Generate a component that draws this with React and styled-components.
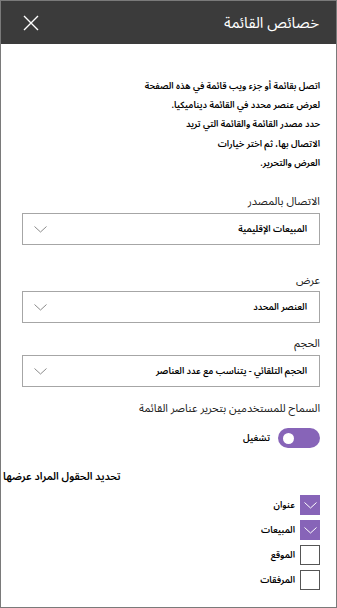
import React from 'react';
import styled, { createGlobalStyle } from 'styled-components';

const Global = createGlobalStyle`
    html, body {
        margin: 0;
        padding: 0;
        background: #ffffff;
    }
    * {
        box-sizing: border-box;
    }
`;

const purple = '#8764b8';

const Panel = styled.div`
    width: 337px;
    height: 608px;
    border: 1px solid #7a7a7a;
    direction: rtl;
    font-family: 'Noto Sans Arabic', 'DejaVu Sans', sans-serif;
    color: #222;
    overflow: hidden;
    display: flex;
    flex-direction: column;
`;

const Header = styled.div`
    height: 43px;
    background: #3b3b3b;
    display: flex;
    align-items: center;
    justify-content: space-between;
    padding: 0 17px 0 22px;
    flex-shrink: 0;
`;

const Title = styled.div`
    color: #ffffff;
    font-size: 15px;
    line-height: 20px;
`;

const CloseButton = styled.div`
    width: 16px;
    height: 16px;
    display: flex;
    cursor: pointer;
`;

const Section = styled.div`
    padding: 0 16px 0 21px;
    margin-top: ${props => props.top || 0}px;
`;

const Intro = styled.p`
    margin: 0;
    font-size: 9px;
    font-weight: 600;
    line-height: 19.2px;
    color: #000;
`;

const Label = styled.div`
    height: 16px;
    display: flex;
    align-items: center;
    font-size: 11px;
    color: #222;
`;

const Dropdown = styled.div`
    margin-top: ${props => props.gap || 6}px;
    height: 32px;
    border: 1px solid #a6a6a6;
    display: flex;
    align-items: center;
    justify-content: space-between;
    padding: 0 12px 0 11px;
    cursor: pointer;
`;

const Value = styled.span`
    font-size: 9px;
    font-weight: 600;
    color: #000;
`;

const ToggleRow = styled.div`
    margin-top: 12px;
    height: 20px;
    display: flex;
    align-items: center;
    gap: 8px;
`;

const Toggle = styled.div`
    width: 42px;
    height: 20px;
    border-radius: 10px;
    background: ${props => (props.on ? purple : '#ffffff')};
    border: ${props => (props.on ? 'none' : '1px solid #333')};
    display: flex;
    align-items: center;
    justify-content: ${props => (props.on ? 'flex-end' : 'flex-start')};
    padding: 0 5px;
`;

const Knob = styled.div`
    width: 11px;
    height: 11px;
    border-radius: 50%;
    background: #ffffff;
`;

const ToggleText = styled.span`
    font-size: 9px;
    font-weight: 600;
    color: #000;
`;

const FieldsHeading = styled.div`
    margin-top: 21px;
    height: 16px;
    display: flex;
    align-items: center;
    justify-content: flex-end;
    padding-left: 2px;
    font-size: 10.5px;
    font-weight: 600;
    color: #000;
`;

const CheckList = styled.div`
    margin-top: 10px;
    display: flex;
    flex-direction: column;
    gap: 5px;
`;

const CheckRow = styled.label`
    height: 20px;
    display: flex;
    align-items: center;
    gap: 5px;
    cursor: pointer;
`;

const Box = styled.div`
    width: 20px;
    height: 20px;
    flex-shrink: 0;
    background: ${props => (props.checked ? purple : '#ffffff')};
    border: ${props => (props.checked ? 'none' : '1px solid #555')};
    display: flex;
    align-items: center;
    justify-content: center;
`;

const CheckText = styled.span`
    font-size: 9px;
    font-weight: 600;
    color: #000;
`;

const Chevron = ({ color = '#8a8a8a' }) => (
    <svg width="13" height="7" viewBox="0 0 13 7">
        <path d="M0.5 0.5 L6.5 6 L12.5 0.5" fill="none" stroke={color} strokeWidth="1" />
    </svg>
);

const fields = [
    { name: 'عنوان', checked: true },
    { name: 'المبيعات', checked: true },
    { name: 'الموقع', checked: false },
    { name: 'المرفقات', checked: false }
];

const App = () => (
    <>
        <Global />
        <Panel>
            <Header>
                <Title>خصائص القائمة</Title>
                <CloseButton>
                    <svg width="16" height="16" viewBox="0 0 16 16">
                        <path d="M1 1 L15 15 M15 1 L1 15" stroke="#ffffff" strokeWidth="1.4" />
                    </svg>
                </CloseButton>
            </Header>

            <Section top={33}>
                <Intro>
                    اتصل بقائمة أو جزء ويب قائمة في هذه الصفحة
                    <br />
                    لعرض عنصر محدد في القائمة ديناميكيا.
                    <br />
                    حدد مصدر القائمة والقائمة التي تريد
                    <br />
                    الاتصال بها، ثم اختر خيارات
                    <br />
                    العرض والتحرير.
                </Intro>
            </Section>

            <Section top={20}>
                <Label>الاتصال بالمصدر</Label>
                <Dropdown gap={4}>
                    <Value>المبيعات الإقليمية</Value>
                    <Chevron />
                </Dropdown>
            </Section>

            <Section top={27}>
                <Label>عرض</Label>
                <Dropdown gap={3}>
                    <Value>العنصر المحدد</Value>
                    <Chevron />
                </Dropdown>
            </Section>

            <Section top={12}>
                <Label>الحجم</Label>
                <Dropdown gap={4}>
                    <Value>الحجم التلقائي - يتناسب مع عدد العناصر</Value>
                    <Chevron />
                </Dropdown>
            </Section>

            <Section top={13}>
                <Label>السماح للمستخدمين بتحرير عناصر القائمة</Label>
                <ToggleRow>
                    <Toggle on>
                        <Knob />
                    </Toggle>
                    <ToggleText>تشغيل</ToggleText>
                </ToggleRow>
            </Section>

            <FieldsHeading>تحديد الحقول المراد عرضها</FieldsHeading>

            <Section>
                <CheckList>
                    {fields.map(f => (
                        <CheckRow key={f.name}>
                            <Box checked={f.checked}>
                                {f.checked && <Chevron color="#ffffff" />}
                            </Box>
                            <CheckText>{f.name}</CheckText>
                        </CheckRow>
                    ))}
                </CheckList>
            </Section>
        </Panel>
    </>
);

export default App;
